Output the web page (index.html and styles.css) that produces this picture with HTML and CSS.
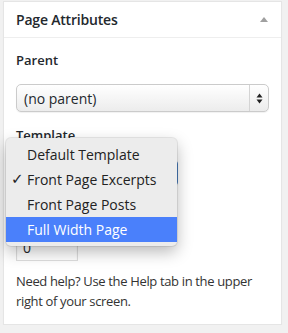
FILE: index.html
```html
<!DOCTYPE html>
<html lang="en">

<head>
    <meta charset="UTF-8">
    <title>Page Attributes</title>
    <link rel="stylesheet" href="styles.css">
</head>

<body>
    <div class="postbox">
        <h2 class="hndle">
            <span>Page Attributes</span>
            <span class="toggle-arrow"></span>
        </h2>
        <div class="inside">
            <p class="label">Parent</p>
            <div class="fake-select">
                <span class="sel-text">(no parent)</span>
                <span class="sel-arrows">
                    <svg width="7" height="11" viewBox="0 0 7 11">
                        <path d="M3.5 0.5 L6.5 4.5 L0.5 4.5 Z" fill="#222"/>
                        <path d="M3.5 10.5 L6.5 6.5 L0.5 6.5 Z" fill="#222"/>
                    </svg>
                </span>
            </div>

            <p class="label">Template</p>
            <div class="fake-select template-select">
                <span class="sel-text">Front Page Excerpts</span>
            </div>

            <p class="label">Order</p>
            <div class="order-input">0</div>

            <p class="help">Need help? Use the Help tab in the upper right of your screen.</p>
        </div>

        <!-- menu nativo aberto sobre o select de template -->
        <ul class="dropdown">
            <li>Default Template</li>
            <li class="checked">Front Page Excerpts</li>
            <li>Front Page Posts</li>
            <li class="hover">Full Width Page</li>
        </ul>
    </div>
</body>

</html>
```

FILE: styles.css
```css
body {
    margin: 0;
    padding: 1px 0 0 3px;
    background: #f1f1f1;
    font-family: 'Open Sans', 'Liberation Sans', sans-serif;
    color: #23282d;
}

.postbox {
    position: relative;
    width: 277px;
    background: #fff;
    border: 1px solid #e5e5e5;
    box-shadow: 0 1px 1px rgba(0, 0, 0, .04);
}

.hndle {
    display: flex;
    justify-content: space-between;
    align-items: center;
    margin: 0;
    height: 35px;
    line-height: 35px;
    padding: 0 13px 0 12px;
    font-size: 14px;
    font-weight: 600;
    letter-spacing: -0.2px;
    border-bottom: 1px solid #eee;
}

.toggle-arrow {
    width: 0;
    height: 0;
    border-left: 4px solid transparent;
    border-right: 4px solid transparent;
    border-bottom: 5px solid #a0a0a0;
    margin-top: -1px;
}

.inside {
    padding: 0 12px 13px;
    font-size: 13px;
}

.label {
    margin: 13px 0 15px;
    line-height: 18px;
    font-weight: 600;
}

.label + .fake-select,
.label + .order-input {
    margin-top: 0;
}

.fake-select + .label {
    margin-top: 14px;
}

.fake-select {
    display: flex;
    align-items: center;
    justify-content: space-between;
    height: 26px;
    border: 1px solid #cbcbcb;
    border-radius: 5px;
    background: linear-gradient(#ffffff, #ececec);
    box-shadow: 0 1px 1px rgba(0, 0, 0, .06);
    font-size: 14px;
}

.sel-text {
    padding-left: 7px;
}

.sel-arrows {
    display: flex;
    align-items: center;
    justify-content: center;
    width: 18px;
    height: 100%;
    border-left: 1px solid #d4d4d4;
}

.template-select {
    width: 160px;
    border-color: #4a7fc0;
}

.order-input {
    width: 54px;
    height: 25px;
    line-height: 25px;
    padding-left: 6px;
    border: 1px solid #ddd;
    box-shadow: inset 0 1px 2px rgba(0, 0, 0, .07);
    font-size: 14px;
}

.help {
    margin: 11px 0 0;
    line-height: 1.5;
    letter-spacing: -0.35px;
    color: #333;
}

.dropdown {
    position: absolute;
    left: 2px;
    top: 136px;
    width: 171px;
    margin: 0;
    padding: 4px 0;
    list-style: none;
    background: #ececec;
    border-radius: 5px;
    box-shadow: 0 0 0 1px rgba(0, 0, 0, .08), 0 6px 16px rgba(0, 0, 0, .28);
    font-size: 14px;
    color: #222;
}

.dropdown li {
    position: relative;
    height: 25px;
    line-height: 25px;
    padding-left: 21px;
}

.dropdown .checked::before {
    content: "\2713";
    position: absolute;
    left: 5px;
    font-family: 'DejaVu Sans', sans-serif;
    font-size: 15px;
    font-weight: bold;
}

.dropdown .hover {
    background: #4a80fb;
    color: #fff;
}
```
